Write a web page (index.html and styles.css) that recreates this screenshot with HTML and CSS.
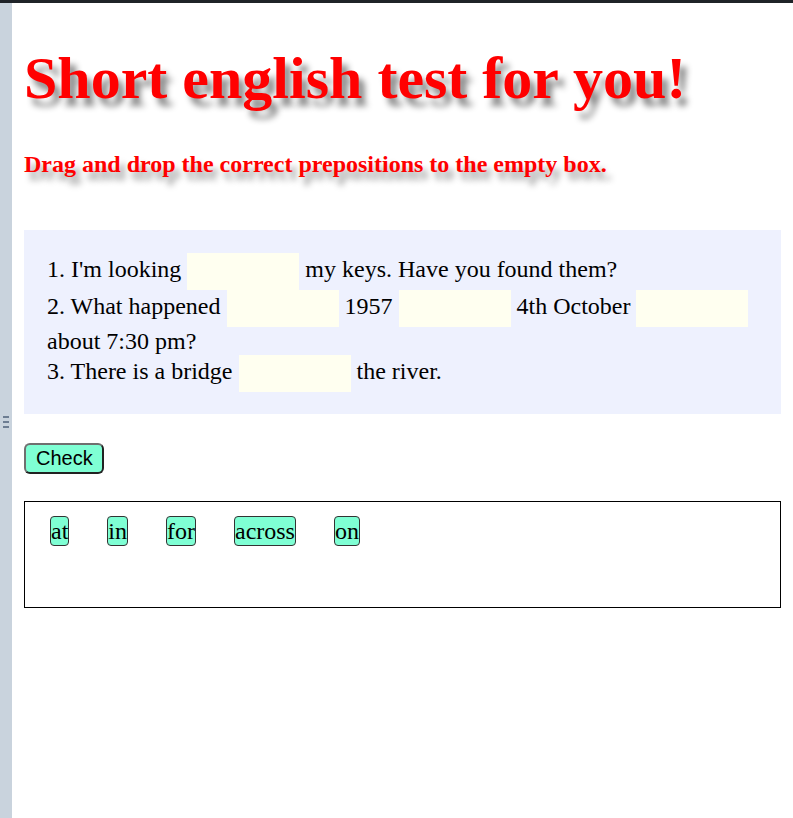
FILE: index.html
```html
<!DOCTYPE html>
<html lang="en">
<head>
<meta charset="utf-8">
<title>Short english test for you!</title>
<link rel="stylesheet" href="styles.css">
</head>
<body>
<div class="topbar"></div>
<div class="layout">
  <div class="rail">
    <div class="handle"><span></span><span></span><span></span></div>
  </div>
  <main class="main">
    <h1 class="title">Short english test for you!</h1>
    <h2 class="subtitle">Drag and drop the correct prepositions to the empty box.</h2>
    <div class="questions">
      <div class="q">1. I'm looking <span class="blank"></span> my keys. Have you found them?</div>
      <div class="q">2. What happened <span class="blank"></span> 1957 <span class="blank"></span> 4th October <span class="blank"></span> about 7:30 pm?</div>
      <div class="q">3. There is a bridge <span class="blank"></span> the river.</div>
    </div>
    <button class="check" type="button">Check</button>
    <div class="bank">
      <span class="chip">at</span>
      <span class="chip">in</span>
      <span class="chip">for</span>
      <span class="chip">across</span>
      <span class="chip">on</span>
    </div>
  </main>
</div>
</body>
</html>
```
FILE: styles.css
```css
html, body {
  margin: 0;
  padding: 0;
  background: #ffffff;
}
body {
  font-family: "Liberation Serif", "Times New Roman", serif;
  color: #000;
}
.topbar {
  height: 3px;
  background: #1f2328;
}
.layout {
  display: flex;
  min-height: 815px;
}
.rail {
  width: 12px;
  flex: 0 0 12px;
  background: #c9d3dd;
  padding-top: 413px;
  box-sizing: border-box;
}
.handle {
  display: flex;
  flex-direction: column;
  gap: 3px;
  padding-left: 3px;
}
.handle span {
  display: block;
  width: 6px;
  height: 2px;
  background: #6d7d92;
}
.main {
  flex: 1;
  padding: 0 12px;
}
.title {
  margin: 41px 0 0;
  font-size: 60px;
  font-weight: bold;
  color: #ff0000;
  text-shadow: 6px 8px 6px #8a8a8a;
}
.subtitle {
  margin: 38px 0 0;
  font-size: 24px;
  font-weight: bold;
  color: #ff0000;
  text-shadow: 5px 8px 6px #9a9a9a;
}
.questions {
  margin-top: 52px;
  background: #eef1fe;
  padding: 23px 22px 22px 23px;
  font-size: 24px;
  line-height: 28px;
}
.blank {
  display: inline-block;
  width: 112px;
  height: 37px;
  background: #fffff0;
  vertical-align: middle;
}
.check {
  display: block;
  margin-top: 29px;
  font-family: "Liberation Sans", Arial, sans-serif;
  font-size: 20px;
  line-height: 23px;
  padding: 2px 10px;
  width: 80px;
  height: 31px;
  background: #7fffd4;
  color: #000;
  border: 2px solid;
  border-color: #6f6f6f #222222 #222222 #6f6f6f;
  border-radius: 6px;
}
.bank {
  margin-top: 27px;
  border: 1px solid #000;
  box-sizing: border-box;
  height: 107px;
  padding: 14px 25px;
  display: flex;
  align-items: flex-start;
  gap: 38px;
}
.chip {
  font-size: 24px;
  line-height: 28px;
  background: #7fffd4;
  border: 1px solid #333;
  border-radius: 4px;
  padding: 0;
}
```
